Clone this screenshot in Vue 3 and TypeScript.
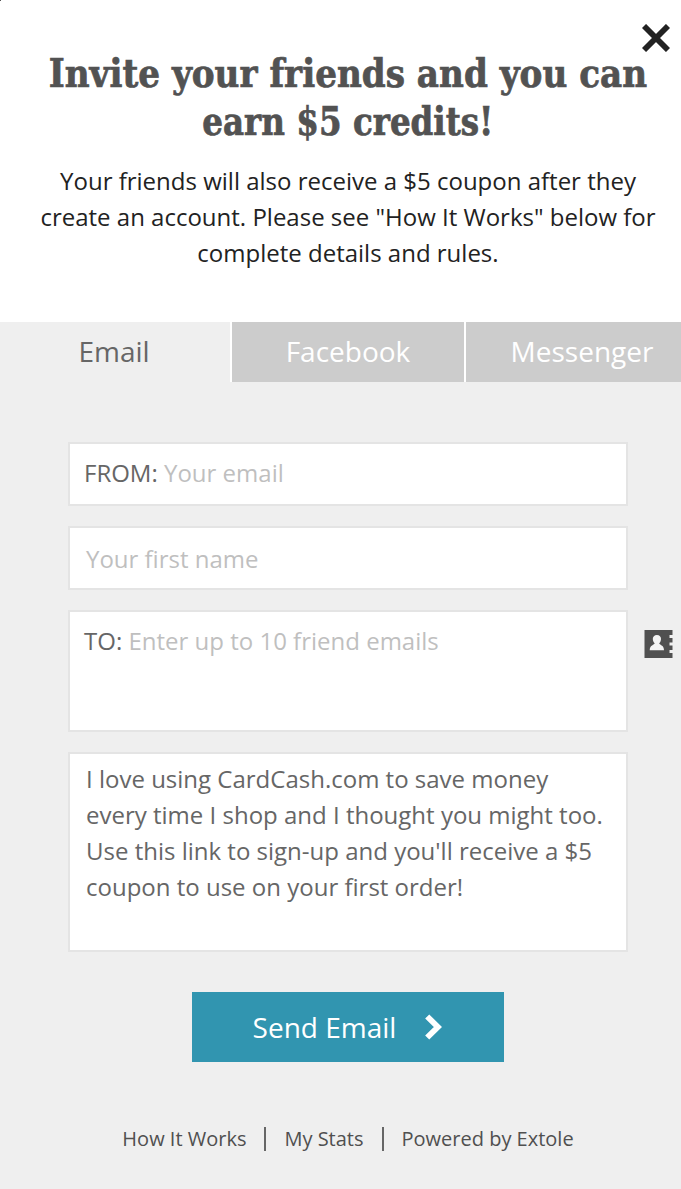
<script setup lang="ts">
const headline = ['Invite your friends and you can', 'earn $5 credits!']
const intro = [
  'Your friends will also receive a $5 coupon after they',
  'create an account. Please see "How It Works" below for',
  'complete details and rules.',
]
const tabs = ['Email', 'Facebook', 'Messenger']
const message = [
  'I love using CardCash.com to save money',
  'every time I shop and I thought you might too.',
  "Use this link to sign-up and you'll receive a $5",
  'coupon to use on your first order!',
]
const links = ['How It Works', 'My Stats', 'Powered by Extole']
</script>

<template>
  <main class="dialog">
    <header class="head">
      <i class="corner"></i>
      <svg class="close" viewBox="0 0 28 28"><path d="M2 2 26 26M26 2 2 26" fill="none" stroke="#222" stroke-width="5.8" /></svg>
      <h1><span v-for="(l, i) in headline" :key="i" :class="'line' + i">{{ l }}</span></h1>
      <p class="intro"><span v-for="l in intro" :key="l">{{ l }}</span></p>
    </header>
    <nav class="tabs">
      <div v-for="(t, i) in tabs" :key="t" class="tab" :class="{ active: i === 0 }">{{ t }}</div>
    </nav>
    <section class="form">
      <div class="field from"><span class="label">FROM:</span> Your email</div>
      <div class="field name">Your first name</div>
      <div class="field to">
        <span class="label">TO:</span> Enter up to 10 friend emails
        <svg class="book" viewBox="0 0 29 28">
          <path fill="#505050" d="M.5 0H28.5V5H25.5V8H28.5V12.5H25.5V15.5H28.5V20H25.5V23H28.5V28H.5Z" />
          <path fill="#f4f4f4" d="M12.9 5C15.5 5 17.2 6.7 17 9C16.9 11 16.3 12.2 15.2 13.3C15.2 15.2 20 14.8 20 20.3H5.7C5.7 14.8 10.5 15.2 10.7 13.3C9.6 12.2 8.9 11 8.8 9C8.7 6.7 10.4 5 12.9 5Z" />
        </svg>
      </div>
      <div class="field message"><span v-for="l in message" :key="l">{{ l }}</span></div>
      <button class="send">
        <span>Send Email</span>
        <svg viewBox="0 0 17 26"><path d="M2.2 2.5 12.9 13 2.2 23.5" fill="none" stroke="#fff" stroke-width="5.8" /></svg>
      </button>
      <footer><span v-for="l in links" :key="l" class="link">{{ l }}</span></footer>
    </section>
  </main>
</template>

<style>
body { margin: 0; overflow: hidden; }
</style>

<style scoped>
.dialog { width: 681px; height: 1189px; overflow: hidden; background: #efefef; font-family: "Open Sans", "Noto Sans", sans-serif; color: #222; }
.head { position: relative; box-sizing: border-box; height: 322px; padding-top: 49px; background: #fff; }
.corner { position: absolute; left: 0; top: 0; width: 1px; height: 1px; background: #555; }
.close { position: absolute; left: 642px; top: 24px; width: 28px; height: 28px; }
h1 { width: 696px; margin: 0; color: #525252; font: bold 39px/48px "Roboto Slab", "DejaVu Serif Condensed", "DejaVu Serif", serif; font-stretch: condensed; display: flex; flex-direction: column; align-items: center; -webkit-text-stroke: .7px #525252; }
h1 span { white-space: nowrap; }
.line0 { transform: scaleX(.975); }
.line1 { transform: scaleX(.928); }
.intro { width: 696px; margin: 18px 0 0; font-size: 24px; line-height: 36px; text-align: center; }
.intro span { display: block; white-space: nowrap; }
.tabs { display: flex; height: 60px; }
.tab { box-sizing: border-box; flex: 0 0 234px; height: 60px; border-left: 2px solid #fff; background: #ccc; color: #fff; font-size: 28px; line-height: 58px; text-align: center; }
.tab.active { flex-basis: 230px; border: 0; padding-right: 2px; background: #efefef; color: #666; }
.form { width: 560px; margin-left: 68px; padding-top: 60px; }
.field { position: relative; box-sizing: border-box; border: 2px solid #e4e4e4; background: #fff; margin-bottom: 20px; padding-left: 14px; font-size: 24px; line-height: 36px; color: #bfbfbf; white-space: nowrap; }
.label { color: #666; }
.from { height: 64px; padding-top: 11px; }
.name { height: 64px; padding: 13px 0 0 16px; }
.to { height: 122px; padding-top: 11px; }
.book { position: absolute; left: 574px; top: 18px; width: 29px; height: 28px; }
.message { height: 200px; padding: 7px 0 0 16px; margin-bottom: 40px; color: #666; }
.message span { display: block; }
.send { display: flex; align-items: center; justify-content: center; gap: 29px; width: 312px; height: 70px; margin: 0 auto; padding: 0 1px 0 0; border: 0; background: #3195b0; color: #fff; font: 28px/70px "Open Sans", sans-serif; }
.send svg { width: 17px; height: 26px; }
footer { display: flex; align-items: center; justify-content: center; margin-top: 63px; font-size: 20px; line-height: 28px; color: #505050; white-space: nowrap; }
.link + .link { display: flex; align-items: center; }
.link + .link::before { content: ""; width: 2px; height: 24px; margin: 0 18px; background: #666; }
</style>
